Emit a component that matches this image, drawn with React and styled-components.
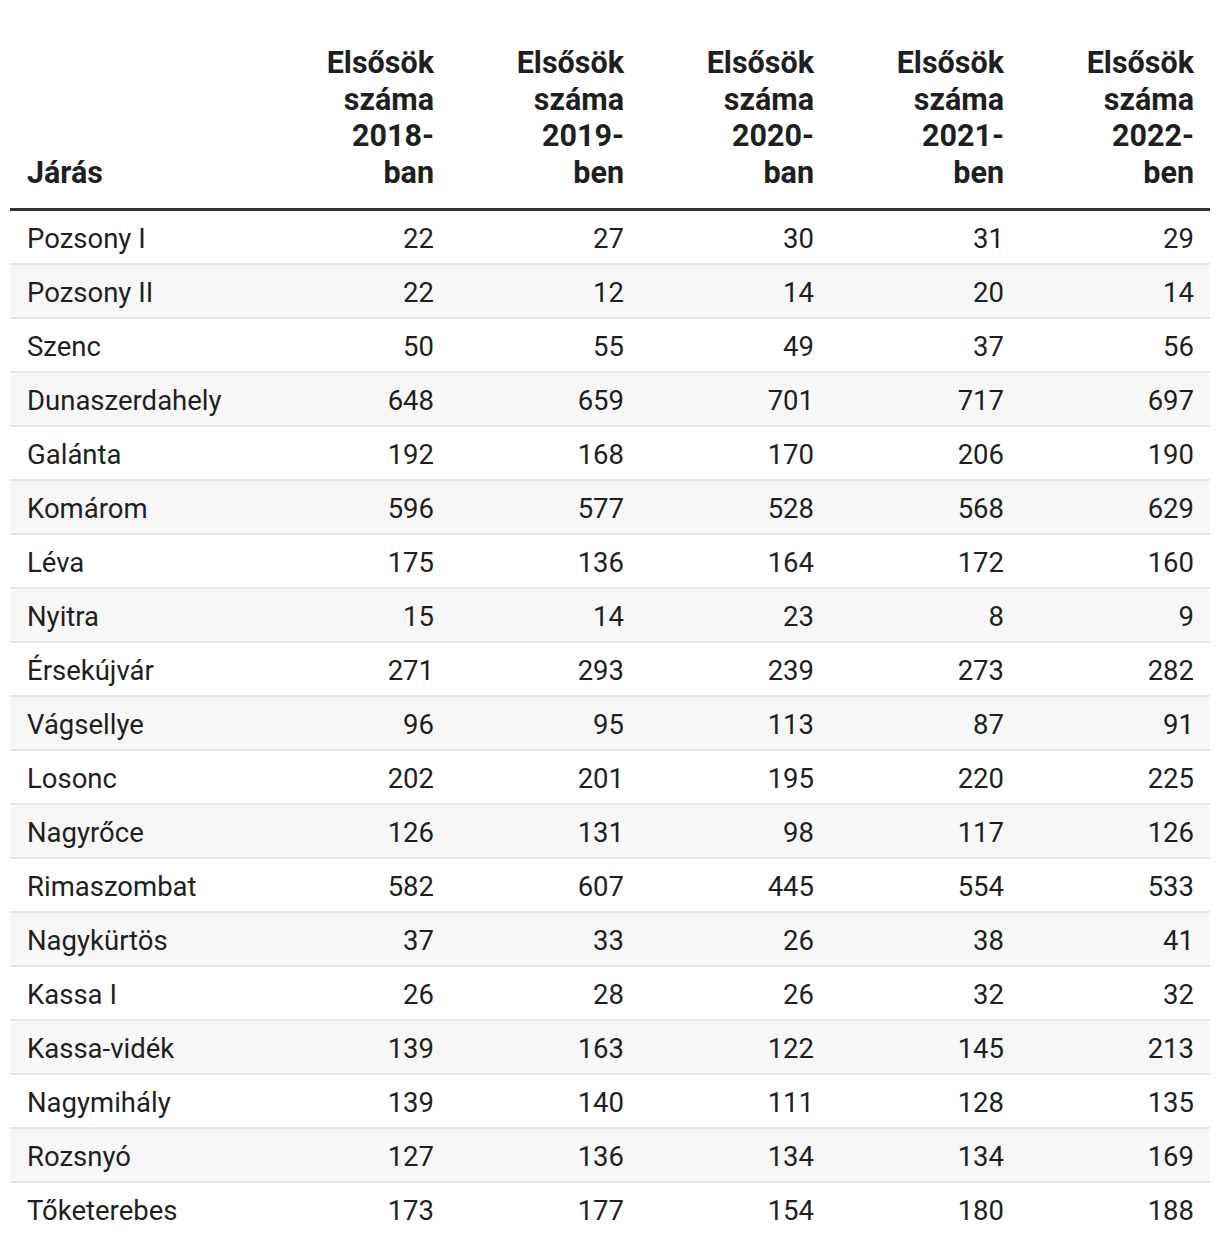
import styled, { createGlobalStyle } from "styled-components";

const GlobalStyle = createGlobalStyle`
  html, body {
    margin: 0;
    padding: 0;
    background: #ffffff;
  }
  body {
    font-family: Roboto, "Liberation Sans", Arial, sans-serif;
    color: #1f1f1f;
  }
  *, *::before, *::after {
    box-sizing: border-box;
  }
`;

const Page = styled.div`
  padding: 29px 10px 0;
`;

const Table = styled.table`
  width: 1200px;
  border-collapse: collapse;
  table-layout: fixed;
`;

const HeadCell = styled.th`
  font-size: 30.5px;
  font-weight: 700;
  line-height: 36.5px;
  color: #1f1f1f;
  vertical-align: bottom;
  text-align: ${props => (props.$left ? "left" : "right")};
  width: ${props => (props.$left ? "250px" : "190px")};
  padding: 16px 16px 17px ${props => (props.$left ? "17px" : "16px")};
  border-bottom: 3px solid #333333;
`;

const Row = styled.tr`
  background: ${props => (props.$striped ? "#f7f7f7" : "#ffffff")};
  border-bottom: ${props => (props.$last ? "none" : "2px solid #e6e6e6")};
`;

const Cell = styled.td`
  font-size: 27.5px;
  font-weight: 400;
  line-height: 32px;
  padding: 12px 16px 8px ${props => (props.$left ? "17px" : "16px")};
  text-align: ${props => (props.$left ? "left" : "right")};
  white-space: nowrap;
`;

const years = [
  ["2018-", "ban"],
  ["2019-", "ben"],
  ["2020-", "ban"],
  ["2021-", "ben"],
  ["2022-", "ben"],
];

const rows = [
  ["Pozsony I", 22, 27, 30, 31, 29],
  ["Pozsony II", 22, 12, 14, 20, 14],
  ["Szenc", 50, 55, 49, 37, 56],
  ["Dunaszerdahely", 648, 659, 701, 717, 697],
  ["Galánta", 192, 168, 170, 206, 190],
  ["Komárom", 596, 577, 528, 568, 629],
  ["Léva", 175, 136, 164, 172, 160],
  ["Nyitra", 15, 14, 23, 8, 9],
  ["Érsekújvár", 271, 293, 239, 273, 282],
  ["Vágsellye", 96, 95, 113, 87, 91],
  ["Losonc", 202, 201, 195, 220, 225],
  ["Nagyrőce", 126, 131, 98, 117, 126],
  ["Rimaszombat", 582, 607, 445, 554, 533],
  ["Nagykürtös", 37, 33, 26, 38, 41],
  ["Kassa I", 26, 28, 26, 32, 32],
  ["Kassa-vidék", 139, 163, 122, 145, 213],
  ["Nagymihály", 139, 140, 111, 128, 135],
  ["Rozsnyó", 127, 136, 134, 134, 169],
  ["Tőketerebes", 173, 177, 154, 180, 188],
];

export default function App() {
  return (
    <Page>
      <GlobalStyle />
      <Table>
        <thead>
          <tr>
            <HeadCell $left>Járás</HeadCell>
            {years.map(([year, suffix]) => (
              <HeadCell key={year}>
                Elsősök
                <br />
                száma
                <br />
                {year}
                <br />
                {suffix}
              </HeadCell>
            ))}
          </tr>
        </thead>
        <tbody>
          {rows.map(([name, ...values], i) => (
            <Row key={name} $striped={i % 2 === 1} $last={i === rows.length - 1}>
              <Cell $left>{name}</Cell>
              {values.map((v, j) => (
                <Cell key={j}>{v}</Cell>
              ))}
            </Row>
          ))}
        </tbody>
      </Table>
    </Page>
  );
}
